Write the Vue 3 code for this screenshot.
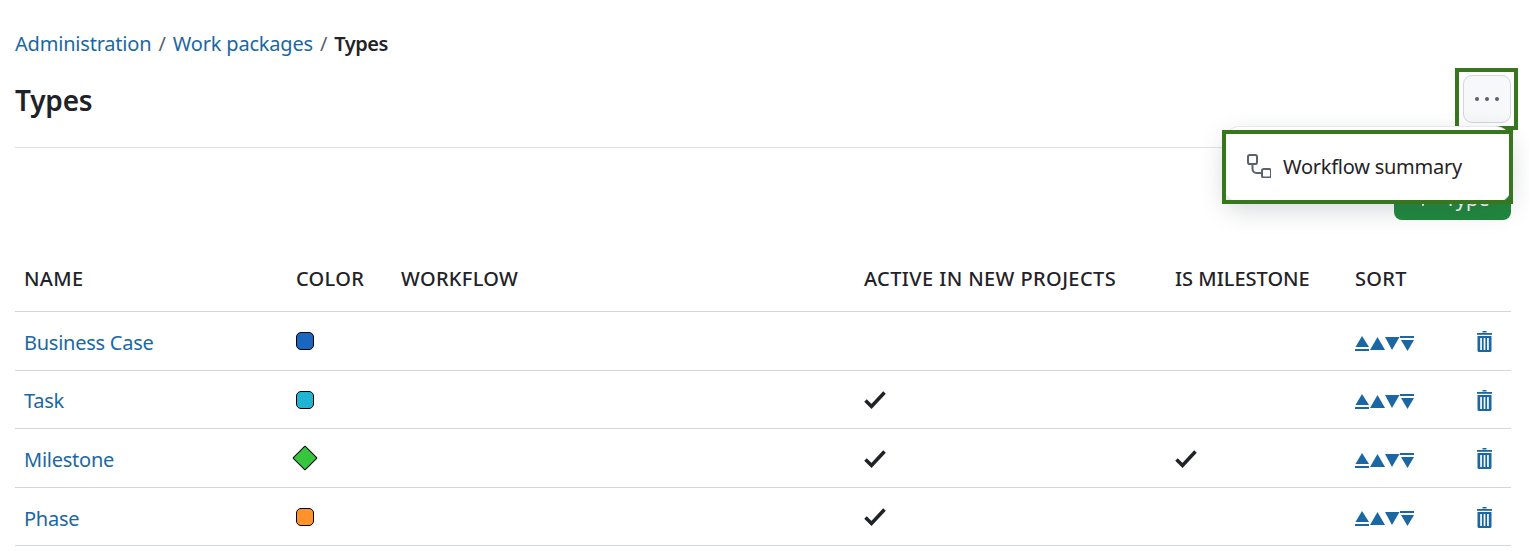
<script setup>
const rows = [
  { name: 'Business Case', color: '#1a67c0', shape: 'square', active: false, milestone: false },
  { name: 'Task', color: '#1fb4d2', shape: 'square', active: true, milestone: false },
  { name: 'Milestone', color: '#35c53f', shape: 'diamond', active: true, milestone: true },
  { name: 'Phase', color: '#ff922b', shape: 'square', active: true, milestone: false },
]
</script>

<template>
  <div class="page">
    <nav class="crumbs">
      <a class="link">Administration</a><span class="sep">/</span><a class="link">Work packages</a><span class="sep">/</span><b class="current">Types</b>
    </nav>
    <header class="head">
      <h1 class="title">Types</h1>
      <div class="more-wrap">
        <button class="more" aria-label="More">
          <svg width="24" height="8" viewBox="0 0 24 8" fill="#59636e"><circle cx="2" cy="4" r="2"/><circle cx="12" cy="4" r="2"/><circle cx="22" cy="4" r="2"/></svg>
        </button>
        <div class="menu">
          <svg class="menu-icon" width="24" height="24" viewBox="0 0 24 24" fill="none" stroke="#59636e" stroke-width="2">
            <rect x="1" y="1" width="9" height="9" rx="1.800"/>
            <rect x="15" y="15" width="9" height="8.500" rx="1.800"/>
            <path d="M5.500 10v5a4 4 0 0 0 4 4H15"/>
          </svg>
          <span>Workflow summary</span>
        </div>
      </div>
    </header>
    <div class="toolbar">
      <button class="add">
        <svg width="16" height="16" viewBox="0 0 16 16" fill="#fff"><rect x="7" y="1" width="2" height="14" rx="1"/><rect x="1" y="7" width="14" height="2" rx="1"/></svg>
        <span>Type</span>
      </button>
    </div>
    <table class="table">
      <colgroup>
        <col class="c-name"><col class="c-color"><col class="c-flow"><col class="c-active"><col class="c-mile"><col class="c-sort"><col>
      </colgroup>
      <thead>
        <tr><th>NAME</th><th>COLOR</th><th>WORKFLOW</th><th class="wide">ACTIVE IN NEW PROJECTS</th><th class="tight">IS MILESTONE</th><th>SORT</th><th></th></tr>
      </thead>
      <tbody>
        <tr v-for="r in rows" :key="r.name">
          <td class="name"><a class="link">{{ r.name }}</a></td>
          <td><span :class="['swatch', r.shape]" :style="{ background: r.color }"></span></td>
          <td></td>
          <td><svg v-if="r.active" class="check" width="24" height="20" viewBox="0 0 24 20" fill="none" stroke="#1f2328" stroke-width="3.600"><path d="M1.500 10.500l6 6L20.500 2.500"/></svg></td>
          <td><svg v-if="r.milestone" class="check" width="24" height="20" viewBox="0 0 24 20" fill="none" stroke="#1f2328" stroke-width="3.600"><path d="M1.500 10.500l6 6L20.500 2.500"/></svg></td>
          <td>
            <svg class="sort" width="60" height="16" viewBox="0 0 60 16" fill="#1a67a3">
              <path d="M7 0l7 11H0.500z"/><rect x="0" y="13" width="14" height="2"/>
              <path d="M22.500 1L30 14H15z"/>
              <path d="M30 1h14.500L37 14z"/>
              <rect x="45" y="0" width="14" height="2"/><path d="M46 4h13L52.500 15z"/>
            </svg>
          </td>
          <td class="del">
            <svg width="15" height="21" viewBox="0 0 15 21" fill="#1a67a3">
              <rect x="5.500" y="0" width="4" height="1.500"/><rect x="0" y="2" width="15" height="1.800"/>
              <path d="M0.500 5h14v14.500a1.500 1.500 0 0 1-1.500 1.500H2a1.500 1.500 0 0 1-1.500-1.500zM3.200 7v12h1.700V7zM6.650 7v12h1.700V7zM10.100 7v12h1.700V7z" fill-rule="evenodd"/>
            </svg>
          </td>
        </tr>
      </tbody>
    </table>
  </div>
</template>

<style scoped>
.page {
  box-sizing: border-box;
  width: 1529px;
  height: 551px;
  padding: 30px 18px 0 15px;
  overflow: hidden;
  background: #fff;
  color: #1f2328;
  font-family: "Noto Sans", "Open Sans", sans-serif;
  font-size: 20px;
}
.link { color: #1a67a3; text-decoration: none; letter-spacing: -0.2px; }
.crumbs { height: 28px; line-height: 28px; white-space: nowrap; }
.sep { color: #59636e; margin: 0 7px; }
.current { font-weight: 600; letter-spacing: -0.5px; }
.head {
  display: flex;
  justify-content: space-between;
  align-items: center;
  height: 90px;
  box-sizing: border-box;
  border-bottom: 1px solid #dfe3e6;
}
.title { margin: 0 0 6px; font-size: 28px; font-weight: 600; line-height: 36px; letter-spacing: -0.2px; }
.more-wrap { position: relative; margin-bottom: 8px; }
.more {
  display: flex;
  align-items: center;
  justify-content: center;
  box-sizing: border-box;
  width: 48px;
  height: 48px;
  padding: 0;
  background: #f6f8fa;
  border: 1px solid #d0d7de;
  border-radius: 9px;
  position: relative;
}
.more::after {
  content: "";
  position: absolute;
  inset: -8px -8px -8px -9px;
  border: 4px solid #38761d;
  pointer-events: none;
}
.menu {
  position: absolute;
  top: 52px;
  right: 0;
  z-index: 2;
  box-sizing: border-box;
  width: 287px;
  height: 75px;
  display: flex;
  align-items: center;
  gap: 12px;
  padding: 5px 0 0 23px;
  background: #fff;
  border-radius: 16px;
  box-shadow: 0 0 0 1px #e6eaef, 0 8px 24px rgba(66, 74, 83, 0.22);
}
.menu span { letter-spacing: -0.25px; }
.menu::after {
  content: "";
  position: absolute;
  inset: 3px -2px -2px -2px;
  border: 4px solid #38761d;
  pointer-events: none;
}
.menu-icon { flex: none; margin-top: -2px; }
.toolbar { display: flex; justify-content: flex-end; padding-top: 30px; height: 42px; }
.add {
  display: flex;
  align-items: center;
  gap: 14px;
  width: 117px;
  height: 42px;
  border: 0;
  border-radius: 8px;
  background: #1f883d;
  color: #fff;
  font: inherit;
  line-height: 36px;
  padding: 0 0 0 21px;
}
.table {
  border-collapse: collapse;
  table-layout: fixed;
  width: 1496px;
  margin-top: 35px;
}
.c-name { width: 272px; }
.c-color { width: 105px; }
.c-flow { width: 463px; }
.c-active { width: 311px; }
.c-mile { width: 180px; }
.c-sort { width: 119px; }
th {
  height: 56px;
  padding: 0 0 8px 9px;
  box-sizing: border-box;
  text-align: left;
  font-weight: 500;
  font-size: 20px;
  letter-spacing: 0.3px;
  color: #1f2328;
  border-bottom: 1px solid #d0d7de;
  white-space: nowrap;
}
th.wide { letter-spacing: 0.4px; }
th.tight { letter-spacing: 0; }
td {
  height: 59px;
  box-sizing: border-box;
  padding: 0 0 0 9px;
  border-bottom: 1px solid #d0d7de;
  vertical-align: middle;
}
tbody tr:nth-child(even) td { height: 58px; }
td.name { padding-top: 3px; }
tbody tr:last-child td.name { padding-top: 5px; }
.name .link { letter-spacing: -0.25px; }
.swatch {
  display: block;
  width: 18px;
  height: 18px;
  box-sizing: border-box;
  border: 1px solid #000;
  margin-top: 1px;
}
.square { border-radius: 5px; }
.diamond { transform: rotate(45deg); border-radius: 1px; }
.check { display: block; margin-top: 2px; }
.sort { display: block; margin-top: 6px; }
.del { padding-left: 0; }
.del svg { display: block; margin: 2px 0 0 12px; }
</style>
